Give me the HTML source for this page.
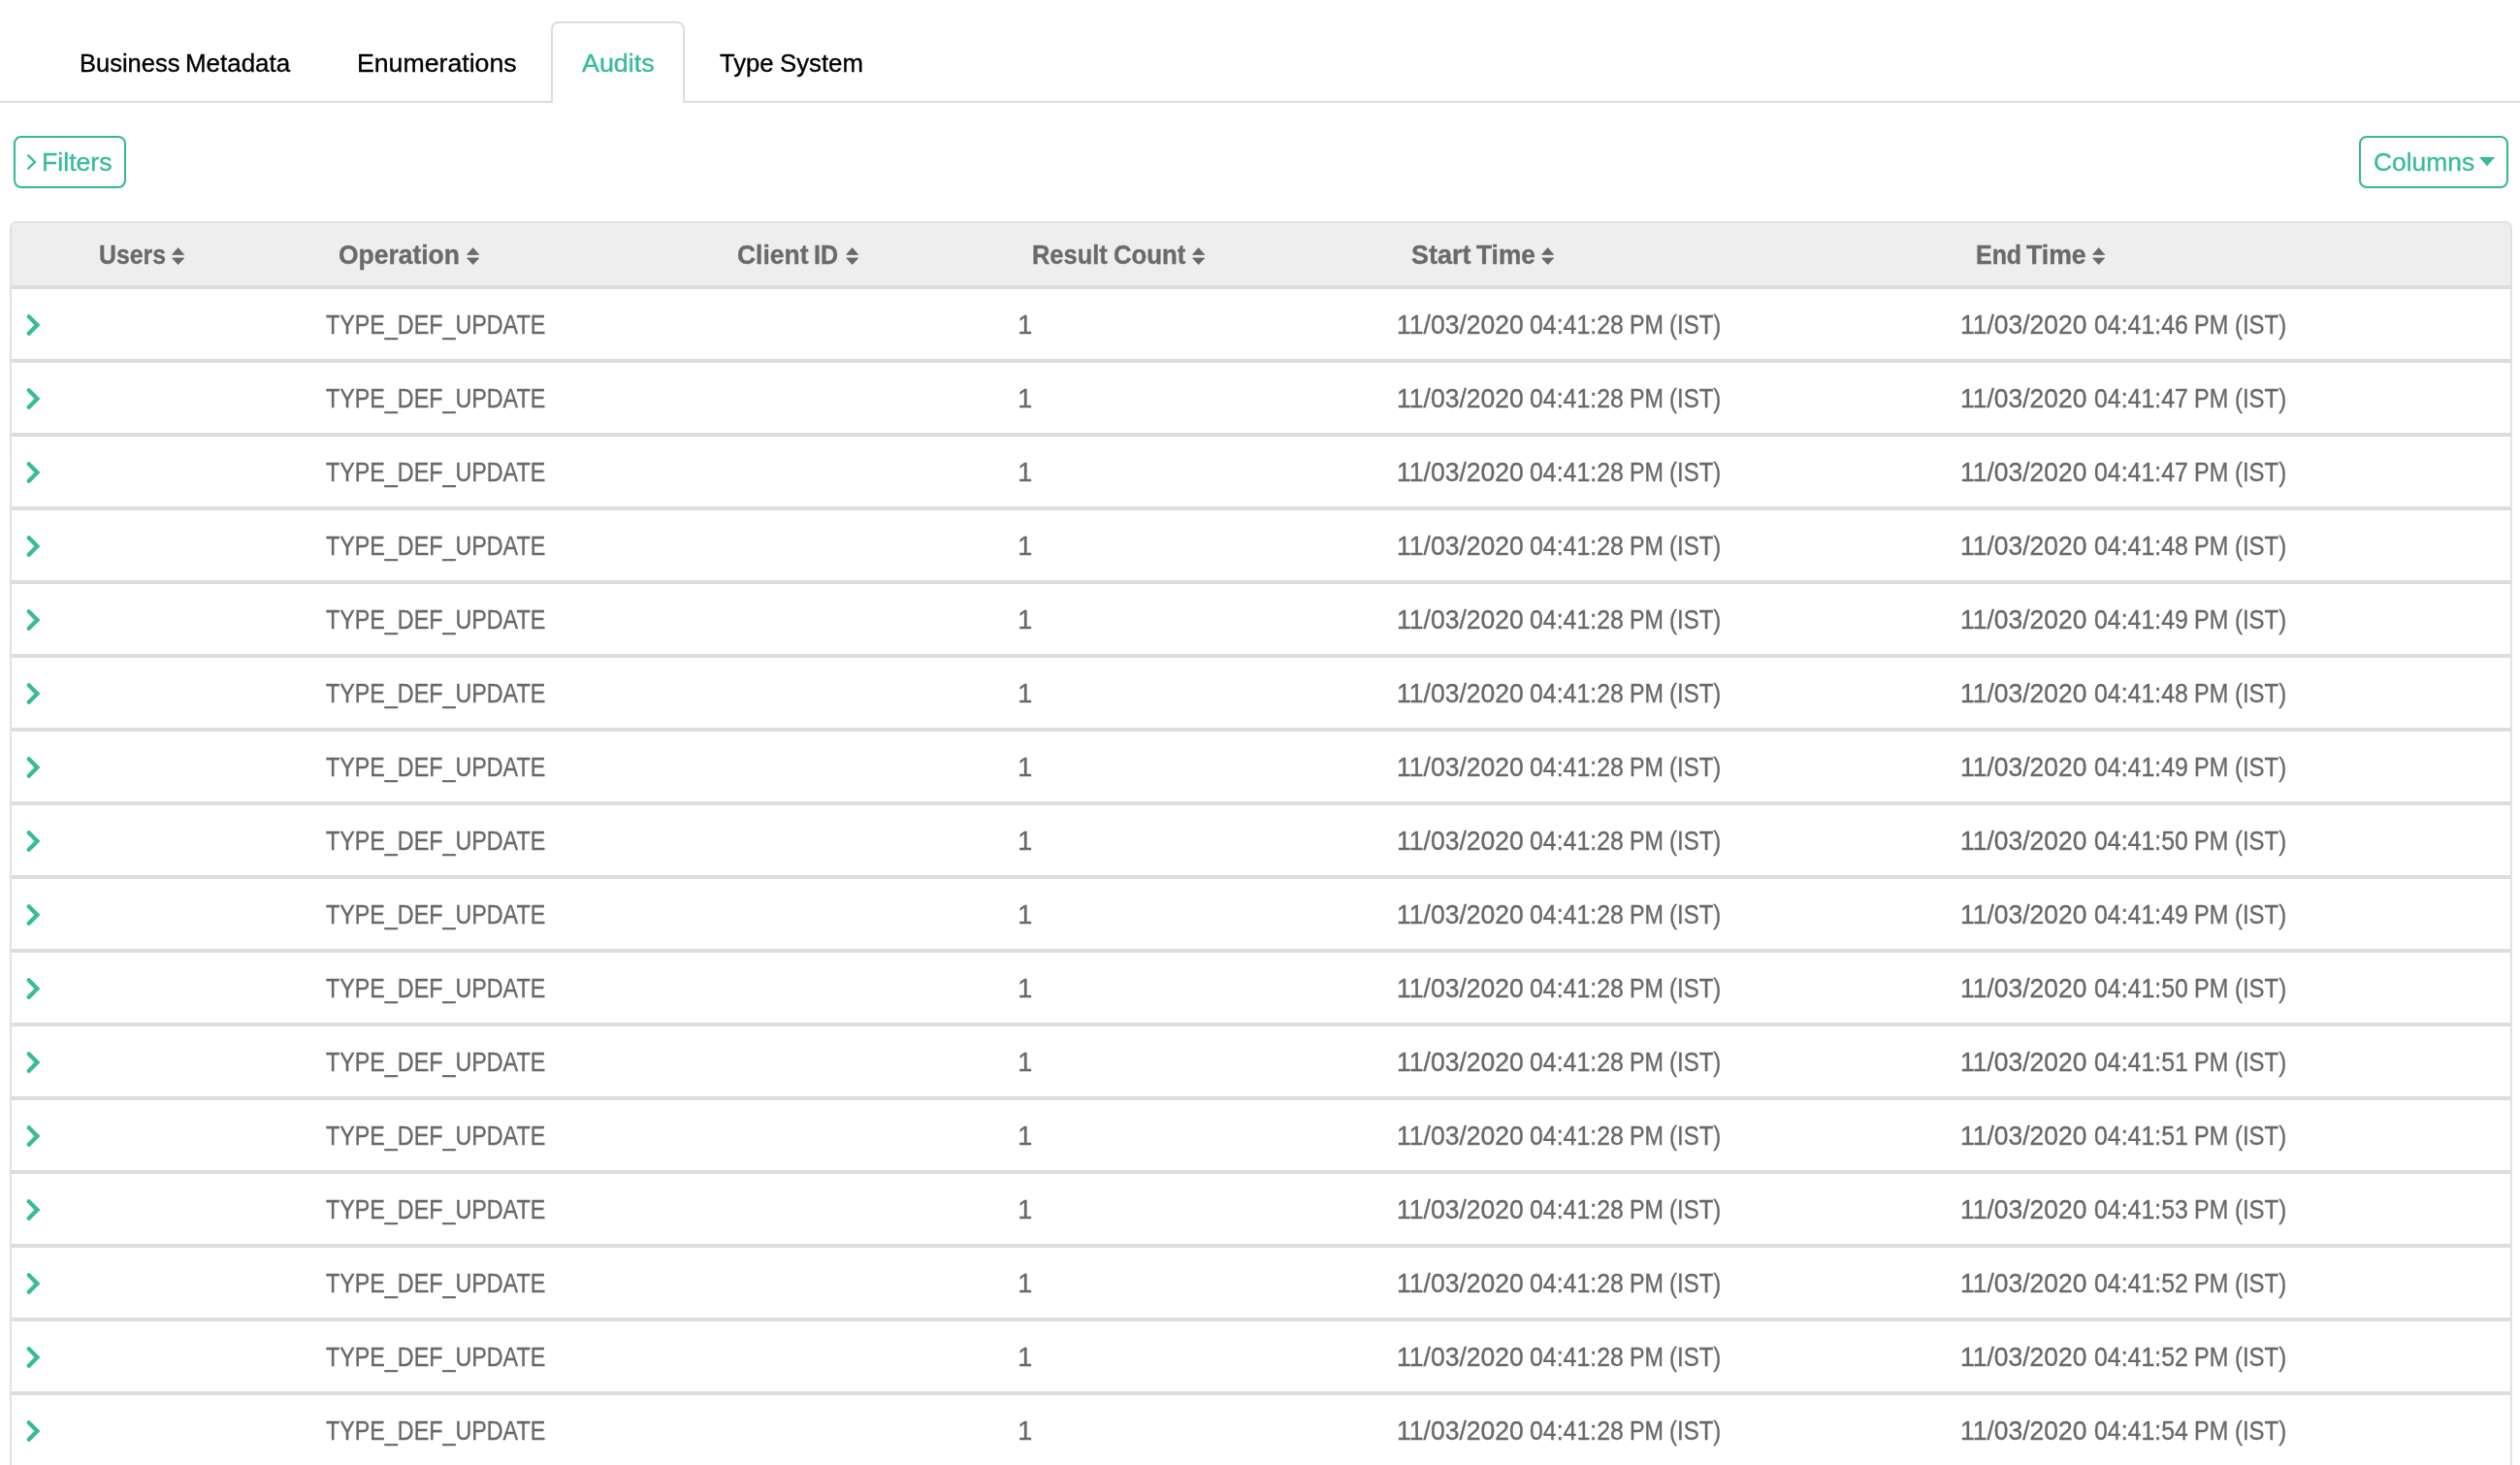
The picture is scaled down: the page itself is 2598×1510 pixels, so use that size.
<!DOCTYPE html><html lang="en"><head><meta charset="utf-8"><title>Audits</title><style>

*{box-sizing:border-box;margin:0;padding:0}
html,body{width:2598px;height:1510px;overflow:hidden;background:#fff}
body{position:relative;font-family:"Liberation Sans",sans-serif;font-size:26px;color:#686868}
.t{position:absolute;white-space:nowrap;transform-origin:0 50%;display:block;-webkit-text-stroke:0.35px currentColor}
#wrap{position:absolute;left:0;top:0;width:2598px;height:1510px;overflow:hidden;will-change:transform}
.tabline{position:absolute;left:0;top:104px;width:2598px;height:2px;background:#ddd}
.tab{top:23px;height:84px;line-height:84px;color:#000;font-size:26.5px}
.tab.on{color:#37bb9b}
.tabbox{position:absolute;left:568px;top:22px;width:138px;height:84px;border:2px solid #ddd;border-bottom:0;border-radius:8px 8px 0 0;background:#fff}
.btn{position:absolute;top:140px;height:54px;border:2px solid #33b797;border-radius:8px;background:#fff}
.bt{top:140px;height:54px;line-height:54px;color:#37bb9b;font-size:26.5px}
.table{position:absolute;left:10px;top:228px;width:2580px;height:1300px;border:2px solid #dfe1e4;border-radius:7px 7px 0 0;background:#fff;overflow:hidden}
.thead{position:absolute;left:0;top:0;width:2576px;height:68px;background:#eee;border-bottom:4px solid #ddd}
.th{top:231px;height:64px;line-height:64px;font-weight:bold;color:#6a6a6a;font-size:27px}
.rl{position:absolute;left:12px;width:2576px;height:4px;background:#ddd}
.td{height:72px;line-height:74px;font-size:27px}
svg{position:absolute;display:block;overflow:visible}

</style></head><body>
<div id="wrap">
<div class="tabline"></div><div class="tabbox"></div>
<span id="tab1_0" class="t tab" style="left:81.61px;transform:scaleX(0.9626);">Business</span> <span id="tab1_1" class="t tab" style="left:190.84px;transform:scaleX(0.9787);">Metadata</span>
<span id="tab2_0" class="t tab" style="left:367.67px;transform:scaleX(1.0065);">Enumerations</span>
<span id="tab3_0" class="t tab on" style="left:599.61px;transform:scaleX(1.0140);">Audits</span>
<span id="tab4_0" class="t tab" style="left:742.04px;transform:scaleX(0.9672);">Type</span> <span id="tab4_1" class="t tab" style="left:803.52px;transform:scaleX(0.9717);">System</span>
<div class="btn" style="left:14px;width:116px"></div>
<svg style="left:26px;top:157px" width="14" height="20" viewBox="0 0 14 20"><path d="M2.4 2.6 L9.9 10 L2.4 17.4" fill="none" stroke="#37bb9b" stroke-width="2.3"/></svg>
<span id="filters_0" class="t bt" style="left:43.33px;transform:scaleX(1.0059);">Filters</span>
<div class="btn" style="left:2432px;width:154px"></div>
<span id="columns_0" class="t bt" style="left:2446.96px;transform:scaleX(0.9957);">Columns</span>
<svg style="left:2556px;top:162px" width="16.2" height="9.4" viewBox="0 0 16.2 9.4"><path d="M0.8 0.5 H15.4 L8.1 8.7 Z" fill="#37bb9b" stroke="#37bb9b" stroke-width="1" stroke-linejoin="round"/></svg>
<div class="table"><div class="thead"></div></div>
<span id="h0_0" class="t th" style="left:102.28px;transform:scaleX(0.9195);">Users</span>
<svg style="left:176.90px;top:255px" width="14" height="18" viewBox="0 0 14 18"><path d="M0.6 7.4 L6.65 0.6 L12.7 7.4 Z M0.6 11 L12.7 11 L6.65 17.6 Z" fill="#6a6a6a" stroke="#6a6a6a" stroke-width="0.8" stroke-linejoin="round"/></svg>
<span id="h1_0" class="t th" style="left:349.48px;transform:scaleX(0.9798);">Operation</span>
<svg style="left:480.80px;top:255px" width="14" height="18" viewBox="0 0 14 18"><path d="M0.6 7.4 L6.65 0.6 L12.7 7.4 Z M0.6 11 L12.7 11 L6.65 17.6 Z" fill="#6a6a6a" stroke="#6a6a6a" stroke-width="0.8" stroke-linejoin="round"/></svg>
<span id="h2_0" class="t th" style="left:759.53px;transform:scaleX(0.9792);">Client</span> <span id="h2_1" class="t th" style="left:839.22px;transform:scaleX(0.9287);">ID</span>
<svg style="left:871.60px;top:255px" width="14" height="18" viewBox="0 0 14 18"><path d="M0.6 7.4 L6.65 0.6 L12.7 7.4 Z M0.6 11 L12.7 11 L6.65 17.6 Z" fill="#6a6a6a" stroke="#6a6a6a" stroke-width="0.8" stroke-linejoin="round"/></svg>
<span id="h3_0" class="t th" style="left:1064.49px;transform:scaleX(0.9421);">Result</span> <span id="h3_1" class="t th" style="left:1148.22px;transform:scaleX(0.9544);">Count</span>
<svg style="left:1229.00px;top:255px" width="14" height="18" viewBox="0 0 14 18"><path d="M0.6 7.4 L6.65 0.6 L12.7 7.4 Z M0.6 11 L12.7 11 L6.65 17.6 Z" fill="#6a6a6a" stroke="#6a6a6a" stroke-width="0.8" stroke-linejoin="round"/></svg>
<span id="h4_0" class="t th" style="left:1454.55px;transform:scaleX(0.9975);">Start</span> <span id="h4_1" class="t th" style="left:1522.22px;transform:scaleX(0.9739);">Time</span>
<svg style="left:1589.20px;top:255px" width="14" height="18" viewBox="0 0 14 18"><path d="M0.6 7.4 L6.65 0.6 L12.7 7.4 Z M0.6 11 L12.7 11 L6.65 17.6 Z" fill="#6a6a6a" stroke="#6a6a6a" stroke-width="0.8" stroke-linejoin="round"/></svg>
<span id="h5_0" class="t th" style="left:2036.58px;transform:scaleX(0.9237);">End</span> <span id="h5_1" class="t th" style="left:2088.81px;transform:scaleX(0.9861);">Time</span>
<svg style="left:2157.30px;top:255px" width="14" height="18" viewBox="0 0 14 18"><path d="M0.6 7.4 L6.65 0.6 L12.7 7.4 Z M0.6 11 L12.7 11 L6.65 17.6 Z" fill="#6a6a6a" stroke="#6a6a6a" stroke-width="0.8" stroke-linejoin="round"/></svg>
<div class="rl" style="top:370px"></div>
<svg style="left:24px;top:320.5px" width="20" height="28" viewBox="0 0 20 28"><path d="M5.7 5.3 L14.4 14 L5.7 22.7" fill="none" stroke="#37bb9b" stroke-width="4.3" stroke-linecap="round" stroke-linejoin="miter"/></svg>
<span id="op_0" class="t td" style="left:336.38px;transform:scaleX(0.8632);top:298px">TYPE_DEF_UPDATE</span>
<span id="one_0" class="t td" style="left:1049.28px;top:298px">1</span>
<span id="start_0" class="t td" style="left:1439.74px;transform:scaleX(0.9825);top:298px">11/03/2020</span> <span id="start_1" class="t td" style="left:1577.45px;transform:scaleX(0.9219);top:298px">04:41:28</span> <span id="start_2" class="t td" style="left:1680.30px;transform:scaleX(0.8630);top:298px">PM</span> <span id="start_3" class="t td" style="left:1721.32px;transform:scaleX(0.8877);top:298px">(IST)</span>
<span id="end_0" class="t td" style="left:2021.27px;transform:scaleX(0.9799);top:298px">11/03/2020</span> <span id="end_1" class="t td" style="left:2158.98px;transform:scaleX(0.9223);top:298px">04:41:46</span> <span id="end_2" class="t td" style="left:2261.61px;transform:scaleX(0.8688);top:298px">PM</span> <span id="end_3" class="t td" style="left:2303.83px;transform:scaleX(0.8861);top:298px">(IST)</span>
<div class="rl" style="top:446px"></div>
<svg style="left:24px;top:396.5px" width="20" height="28" viewBox="0 0 20 28"><path d="M5.7 5.3 L14.4 14 L5.7 22.7" fill="none" stroke="#37bb9b" stroke-width="4.3" stroke-linecap="round" stroke-linejoin="miter"/></svg>
<span class="t td" style="left:336.38px;transform:scaleX(0.8632);top:374px">TYPE_DEF_UPDATE</span>
<span class="t td" style="left:1049.28px;top:374px">1</span>
<span class="t td" style="left:1439.74px;transform:scaleX(0.9825);top:374px">11/03/2020</span> <span class="t td" style="left:1577.45px;transform:scaleX(0.9219);top:374px">04:41:28</span> <span class="t td" style="left:1680.30px;transform:scaleX(0.8630);top:374px">PM</span> <span class="t td" style="left:1721.32px;transform:scaleX(0.8877);top:374px">(IST)</span>
<span class="t td" style="left:2021.27px;transform:scaleX(0.9799);top:374px">11/03/2020</span> <span class="t td" style="left:2158.98px;transform:scaleX(0.9223);top:374px">04:41:47</span> <span class="t td" style="left:2261.61px;transform:scaleX(0.8688);top:374px">PM</span> <span class="t td" style="left:2303.83px;transform:scaleX(0.8861);top:374px">(IST)</span>
<div class="rl" style="top:522px"></div>
<svg style="left:24px;top:472.5px" width="20" height="28" viewBox="0 0 20 28"><path d="M5.7 5.3 L14.4 14 L5.7 22.7" fill="none" stroke="#37bb9b" stroke-width="4.3" stroke-linecap="round" stroke-linejoin="miter"/></svg>
<span class="t td" style="left:336.38px;transform:scaleX(0.8632);top:450px">TYPE_DEF_UPDATE</span>
<span class="t td" style="left:1049.28px;top:450px">1</span>
<span class="t td" style="left:1439.74px;transform:scaleX(0.9825);top:450px">11/03/2020</span> <span class="t td" style="left:1577.45px;transform:scaleX(0.9219);top:450px">04:41:28</span> <span class="t td" style="left:1680.30px;transform:scaleX(0.8630);top:450px">PM</span> <span class="t td" style="left:1721.32px;transform:scaleX(0.8877);top:450px">(IST)</span>
<span class="t td" style="left:2021.27px;transform:scaleX(0.9799);top:450px">11/03/2020</span> <span class="t td" style="left:2158.98px;transform:scaleX(0.9223);top:450px">04:41:47</span> <span class="t td" style="left:2261.61px;transform:scaleX(0.8688);top:450px">PM</span> <span class="t td" style="left:2303.83px;transform:scaleX(0.8861);top:450px">(IST)</span>
<div class="rl" style="top:598px"></div>
<svg style="left:24px;top:548.5px" width="20" height="28" viewBox="0 0 20 28"><path d="M5.7 5.3 L14.4 14 L5.7 22.7" fill="none" stroke="#37bb9b" stroke-width="4.3" stroke-linecap="round" stroke-linejoin="miter"/></svg>
<span class="t td" style="left:336.38px;transform:scaleX(0.8632);top:526px">TYPE_DEF_UPDATE</span>
<span class="t td" style="left:1049.28px;top:526px">1</span>
<span class="t td" style="left:1439.74px;transform:scaleX(0.9825);top:526px">11/03/2020</span> <span class="t td" style="left:1577.45px;transform:scaleX(0.9219);top:526px">04:41:28</span> <span class="t td" style="left:1680.30px;transform:scaleX(0.8630);top:526px">PM</span> <span class="t td" style="left:1721.32px;transform:scaleX(0.8877);top:526px">(IST)</span>
<span class="t td" style="left:2021.27px;transform:scaleX(0.9799);top:526px">11/03/2020</span> <span class="t td" style="left:2158.98px;transform:scaleX(0.9223);top:526px">04:41:48</span> <span class="t td" style="left:2261.61px;transform:scaleX(0.8688);top:526px">PM</span> <span class="t td" style="left:2303.83px;transform:scaleX(0.8861);top:526px">(IST)</span>
<div class="rl" style="top:674px"></div>
<svg style="left:24px;top:624.5px" width="20" height="28" viewBox="0 0 20 28"><path d="M5.7 5.3 L14.4 14 L5.7 22.7" fill="none" stroke="#37bb9b" stroke-width="4.3" stroke-linecap="round" stroke-linejoin="miter"/></svg>
<span class="t td" style="left:336.38px;transform:scaleX(0.8632);top:602px">TYPE_DEF_UPDATE</span>
<span class="t td" style="left:1049.28px;top:602px">1</span>
<span class="t td" style="left:1439.74px;transform:scaleX(0.9825);top:602px">11/03/2020</span> <span class="t td" style="left:1577.45px;transform:scaleX(0.9219);top:602px">04:41:28</span> <span class="t td" style="left:1680.30px;transform:scaleX(0.8630);top:602px">PM</span> <span class="t td" style="left:1721.32px;transform:scaleX(0.8877);top:602px">(IST)</span>
<span class="t td" style="left:2021.27px;transform:scaleX(0.9799);top:602px">11/03/2020</span> <span class="t td" style="left:2158.98px;transform:scaleX(0.9223);top:602px">04:41:49</span> <span class="t td" style="left:2261.61px;transform:scaleX(0.8688);top:602px">PM</span> <span class="t td" style="left:2303.83px;transform:scaleX(0.8861);top:602px">(IST)</span>
<div class="rl" style="top:750px"></div>
<svg style="left:24px;top:700.5px" width="20" height="28" viewBox="0 0 20 28"><path d="M5.7 5.3 L14.4 14 L5.7 22.7" fill="none" stroke="#37bb9b" stroke-width="4.3" stroke-linecap="round" stroke-linejoin="miter"/></svg>
<span class="t td" style="left:336.38px;transform:scaleX(0.8632);top:678px">TYPE_DEF_UPDATE</span>
<span class="t td" style="left:1049.28px;top:678px">1</span>
<span class="t td" style="left:1439.74px;transform:scaleX(0.9825);top:678px">11/03/2020</span> <span class="t td" style="left:1577.45px;transform:scaleX(0.9219);top:678px">04:41:28</span> <span class="t td" style="left:1680.30px;transform:scaleX(0.8630);top:678px">PM</span> <span class="t td" style="left:1721.32px;transform:scaleX(0.8877);top:678px">(IST)</span>
<span class="t td" style="left:2021.27px;transform:scaleX(0.9799);top:678px">11/03/2020</span> <span class="t td" style="left:2158.98px;transform:scaleX(0.9223);top:678px">04:41:48</span> <span class="t td" style="left:2261.61px;transform:scaleX(0.8688);top:678px">PM</span> <span class="t td" style="left:2303.83px;transform:scaleX(0.8861);top:678px">(IST)</span>
<div class="rl" style="top:826px"></div>
<svg style="left:24px;top:776.5px" width="20" height="28" viewBox="0 0 20 28"><path d="M5.7 5.3 L14.4 14 L5.7 22.7" fill="none" stroke="#37bb9b" stroke-width="4.3" stroke-linecap="round" stroke-linejoin="miter"/></svg>
<span class="t td" style="left:336.38px;transform:scaleX(0.8632);top:754px">TYPE_DEF_UPDATE</span>
<span class="t td" style="left:1049.28px;top:754px">1</span>
<span class="t td" style="left:1439.74px;transform:scaleX(0.9825);top:754px">11/03/2020</span> <span class="t td" style="left:1577.45px;transform:scaleX(0.9219);top:754px">04:41:28</span> <span class="t td" style="left:1680.30px;transform:scaleX(0.8630);top:754px">PM</span> <span class="t td" style="left:1721.32px;transform:scaleX(0.8877);top:754px">(IST)</span>
<span class="t td" style="left:2021.27px;transform:scaleX(0.9799);top:754px">11/03/2020</span> <span class="t td" style="left:2158.98px;transform:scaleX(0.9223);top:754px">04:41:49</span> <span class="t td" style="left:2261.61px;transform:scaleX(0.8688);top:754px">PM</span> <span class="t td" style="left:2303.83px;transform:scaleX(0.8861);top:754px">(IST)</span>
<div class="rl" style="top:902px"></div>
<svg style="left:24px;top:852.5px" width="20" height="28" viewBox="0 0 20 28"><path d="M5.7 5.3 L14.4 14 L5.7 22.7" fill="none" stroke="#37bb9b" stroke-width="4.3" stroke-linecap="round" stroke-linejoin="miter"/></svg>
<span class="t td" style="left:336.38px;transform:scaleX(0.8632);top:830px">TYPE_DEF_UPDATE</span>
<span class="t td" style="left:1049.28px;top:830px">1</span>
<span class="t td" style="left:1439.74px;transform:scaleX(0.9825);top:830px">11/03/2020</span> <span class="t td" style="left:1577.45px;transform:scaleX(0.9219);top:830px">04:41:28</span> <span class="t td" style="left:1680.30px;transform:scaleX(0.8630);top:830px">PM</span> <span class="t td" style="left:1721.32px;transform:scaleX(0.8877);top:830px">(IST)</span>
<span class="t td" style="left:2021.27px;transform:scaleX(0.9799);top:830px">11/03/2020</span> <span class="t td" style="left:2158.98px;transform:scaleX(0.9223);top:830px">04:41:50</span> <span class="t td" style="left:2261.61px;transform:scaleX(0.8688);top:830px">PM</span> <span class="t td" style="left:2303.83px;transform:scaleX(0.8861);top:830px">(IST)</span>
<div class="rl" style="top:978px"></div>
<svg style="left:24px;top:928.5px" width="20" height="28" viewBox="0 0 20 28"><path d="M5.7 5.3 L14.4 14 L5.7 22.7" fill="none" stroke="#37bb9b" stroke-width="4.3" stroke-linecap="round" stroke-linejoin="miter"/></svg>
<span class="t td" style="left:336.38px;transform:scaleX(0.8632);top:906px">TYPE_DEF_UPDATE</span>
<span class="t td" style="left:1049.28px;top:906px">1</span>
<span class="t td" style="left:1439.74px;transform:scaleX(0.9825);top:906px">11/03/2020</span> <span class="t td" style="left:1577.45px;transform:scaleX(0.9219);top:906px">04:41:28</span> <span class="t td" style="left:1680.30px;transform:scaleX(0.8630);top:906px">PM</span> <span class="t td" style="left:1721.32px;transform:scaleX(0.8877);top:906px">(IST)</span>
<span class="t td" style="left:2021.27px;transform:scaleX(0.9799);top:906px">11/03/2020</span> <span class="t td" style="left:2158.98px;transform:scaleX(0.9223);top:906px">04:41:49</span> <span class="t td" style="left:2261.61px;transform:scaleX(0.8688);top:906px">PM</span> <span class="t td" style="left:2303.83px;transform:scaleX(0.8861);top:906px">(IST)</span>
<div class="rl" style="top:1054px"></div>
<svg style="left:24px;top:1004.5px" width="20" height="28" viewBox="0 0 20 28"><path d="M5.7 5.3 L14.4 14 L5.7 22.7" fill="none" stroke="#37bb9b" stroke-width="4.3" stroke-linecap="round" stroke-linejoin="miter"/></svg>
<span class="t td" style="left:336.38px;transform:scaleX(0.8632);top:982px">TYPE_DEF_UPDATE</span>
<span class="t td" style="left:1049.28px;top:982px">1</span>
<span class="t td" style="left:1439.74px;transform:scaleX(0.9825);top:982px">11/03/2020</span> <span class="t td" style="left:1577.45px;transform:scaleX(0.9219);top:982px">04:41:28</span> <span class="t td" style="left:1680.30px;transform:scaleX(0.8630);top:982px">PM</span> <span class="t td" style="left:1721.32px;transform:scaleX(0.8877);top:982px">(IST)</span>
<span class="t td" style="left:2021.27px;transform:scaleX(0.9799);top:982px">11/03/2020</span> <span class="t td" style="left:2158.98px;transform:scaleX(0.9223);top:982px">04:41:50</span> <span class="t td" style="left:2261.61px;transform:scaleX(0.8688);top:982px">PM</span> <span class="t td" style="left:2303.83px;transform:scaleX(0.8861);top:982px">(IST)</span>
<div class="rl" style="top:1130px"></div>
<svg style="left:24px;top:1080.5px" width="20" height="28" viewBox="0 0 20 28"><path d="M5.7 5.3 L14.4 14 L5.7 22.7" fill="none" stroke="#37bb9b" stroke-width="4.3" stroke-linecap="round" stroke-linejoin="miter"/></svg>
<span class="t td" style="left:336.38px;transform:scaleX(0.8632);top:1058px">TYPE_DEF_UPDATE</span>
<span class="t td" style="left:1049.28px;top:1058px">1</span>
<span class="t td" style="left:1439.74px;transform:scaleX(0.9825);top:1058px">11/03/2020</span> <span class="t td" style="left:1577.45px;transform:scaleX(0.9219);top:1058px">04:41:28</span> <span class="t td" style="left:1680.30px;transform:scaleX(0.8630);top:1058px">PM</span> <span class="t td" style="left:1721.32px;transform:scaleX(0.8877);top:1058px">(IST)</span>
<span class="t td" style="left:2021.27px;transform:scaleX(0.9799);top:1058px">11/03/2020</span> <span class="t td" style="left:2158.98px;transform:scaleX(0.9223);top:1058px">04:41:51</span> <span class="t td" style="left:2261.61px;transform:scaleX(0.8688);top:1058px">PM</span> <span class="t td" style="left:2303.83px;transform:scaleX(0.8861);top:1058px">(IST)</span>
<div class="rl" style="top:1206px"></div>
<svg style="left:24px;top:1156.5px" width="20" height="28" viewBox="0 0 20 28"><path d="M5.7 5.3 L14.4 14 L5.7 22.7" fill="none" stroke="#37bb9b" stroke-width="4.3" stroke-linecap="round" stroke-linejoin="miter"/></svg>
<span class="t td" style="left:336.38px;transform:scaleX(0.8632);top:1134px">TYPE_DEF_UPDATE</span>
<span class="t td" style="left:1049.28px;top:1134px">1</span>
<span class="t td" style="left:1439.74px;transform:scaleX(0.9825);top:1134px">11/03/2020</span> <span class="t td" style="left:1577.45px;transform:scaleX(0.9219);top:1134px">04:41:28</span> <span class="t td" style="left:1680.30px;transform:scaleX(0.8630);top:1134px">PM</span> <span class="t td" style="left:1721.32px;transform:scaleX(0.8877);top:1134px">(IST)</span>
<span class="t td" style="left:2021.27px;transform:scaleX(0.9799);top:1134px">11/03/2020</span> <span class="t td" style="left:2158.98px;transform:scaleX(0.9223);top:1134px">04:41:51</span> <span class="t td" style="left:2261.61px;transform:scaleX(0.8688);top:1134px">PM</span> <span class="t td" style="left:2303.83px;transform:scaleX(0.8861);top:1134px">(IST)</span>
<div class="rl" style="top:1282px"></div>
<svg style="left:24px;top:1232.5px" width="20" height="28" viewBox="0 0 20 28"><path d="M5.7 5.3 L14.4 14 L5.7 22.7" fill="none" stroke="#37bb9b" stroke-width="4.3" stroke-linecap="round" stroke-linejoin="miter"/></svg>
<span class="t td" style="left:336.38px;transform:scaleX(0.8632);top:1210px">TYPE_DEF_UPDATE</span>
<span class="t td" style="left:1049.28px;top:1210px">1</span>
<span class="t td" style="left:1439.74px;transform:scaleX(0.9825);top:1210px">11/03/2020</span> <span class="t td" style="left:1577.45px;transform:scaleX(0.9219);top:1210px">04:41:28</span> <span class="t td" style="left:1680.30px;transform:scaleX(0.8630);top:1210px">PM</span> <span class="t td" style="left:1721.32px;transform:scaleX(0.8877);top:1210px">(IST)</span>
<span class="t td" style="left:2021.27px;transform:scaleX(0.9799);top:1210px">11/03/2020</span> <span class="t td" style="left:2158.98px;transform:scaleX(0.9223);top:1210px">04:41:53</span> <span class="t td" style="left:2261.61px;transform:scaleX(0.8688);top:1210px">PM</span> <span class="t td" style="left:2303.83px;transform:scaleX(0.8861);top:1210px">(IST)</span>
<div class="rl" style="top:1358px"></div>
<svg style="left:24px;top:1308.5px" width="20" height="28" viewBox="0 0 20 28"><path d="M5.7 5.3 L14.4 14 L5.7 22.7" fill="none" stroke="#37bb9b" stroke-width="4.3" stroke-linecap="round" stroke-linejoin="miter"/></svg>
<span class="t td" style="left:336.38px;transform:scaleX(0.8632);top:1286px">TYPE_DEF_UPDATE</span>
<span class="t td" style="left:1049.28px;top:1286px">1</span>
<span class="t td" style="left:1439.74px;transform:scaleX(0.9825);top:1286px">11/03/2020</span> <span class="t td" style="left:1577.45px;transform:scaleX(0.9219);top:1286px">04:41:28</span> <span class="t td" style="left:1680.30px;transform:scaleX(0.8630);top:1286px">PM</span> <span class="t td" style="left:1721.32px;transform:scaleX(0.8877);top:1286px">(IST)</span>
<span class="t td" style="left:2021.27px;transform:scaleX(0.9799);top:1286px">11/03/2020</span> <span class="t td" style="left:2158.98px;transform:scaleX(0.9223);top:1286px">04:41:52</span> <span class="t td" style="left:2261.61px;transform:scaleX(0.8688);top:1286px">PM</span> <span class="t td" style="left:2303.83px;transform:scaleX(0.8861);top:1286px">(IST)</span>
<div class="rl" style="top:1434px"></div>
<svg style="left:24px;top:1384.5px" width="20" height="28" viewBox="0 0 20 28"><path d="M5.7 5.3 L14.4 14 L5.7 22.7" fill="none" stroke="#37bb9b" stroke-width="4.3" stroke-linecap="round" stroke-linejoin="miter"/></svg>
<span class="t td" style="left:336.38px;transform:scaleX(0.8632);top:1362px">TYPE_DEF_UPDATE</span>
<span class="t td" style="left:1049.28px;top:1362px">1</span>
<span class="t td" style="left:1439.74px;transform:scaleX(0.9825);top:1362px">11/03/2020</span> <span class="t td" style="left:1577.45px;transform:scaleX(0.9219);top:1362px">04:41:28</span> <span class="t td" style="left:1680.30px;transform:scaleX(0.8630);top:1362px">PM</span> <span class="t td" style="left:1721.32px;transform:scaleX(0.8877);top:1362px">(IST)</span>
<span class="t td" style="left:2021.27px;transform:scaleX(0.9799);top:1362px">11/03/2020</span> <span class="t td" style="left:2158.98px;transform:scaleX(0.9223);top:1362px">04:41:52</span> <span class="t td" style="left:2261.61px;transform:scaleX(0.8688);top:1362px">PM</span> <span class="t td" style="left:2303.83px;transform:scaleX(0.8861);top:1362px">(IST)</span>
<div class="rl" style="top:1510px"></div>
<svg style="left:24px;top:1460.5px" width="20" height="28" viewBox="0 0 20 28"><path d="M5.7 5.3 L14.4 14 L5.7 22.7" fill="none" stroke="#37bb9b" stroke-width="4.3" stroke-linecap="round" stroke-linejoin="miter"/></svg>
<span class="t td" style="left:336.38px;transform:scaleX(0.8632);top:1438px">TYPE_DEF_UPDATE</span>
<span class="t td" style="left:1049.28px;top:1438px">1</span>
<span class="t td" style="left:1439.74px;transform:scaleX(0.9825);top:1438px">11/03/2020</span> <span class="t td" style="left:1577.45px;transform:scaleX(0.9219);top:1438px">04:41:28</span> <span class="t td" style="left:1680.30px;transform:scaleX(0.8630);top:1438px">PM</span> <span class="t td" style="left:1721.32px;transform:scaleX(0.8877);top:1438px">(IST)</span>
<span class="t td" style="left:2021.27px;transform:scaleX(0.9799);top:1438px">11/03/2020</span> <span class="t td" style="left:2158.98px;transform:scaleX(0.9223);top:1438px">04:41:54</span> <span class="t td" style="left:2261.61px;transform:scaleX(0.8688);top:1438px">PM</span> <span class="t td" style="left:2303.83px;transform:scaleX(0.8861);top:1438px">(IST)</span>
</div>
</body></html>
